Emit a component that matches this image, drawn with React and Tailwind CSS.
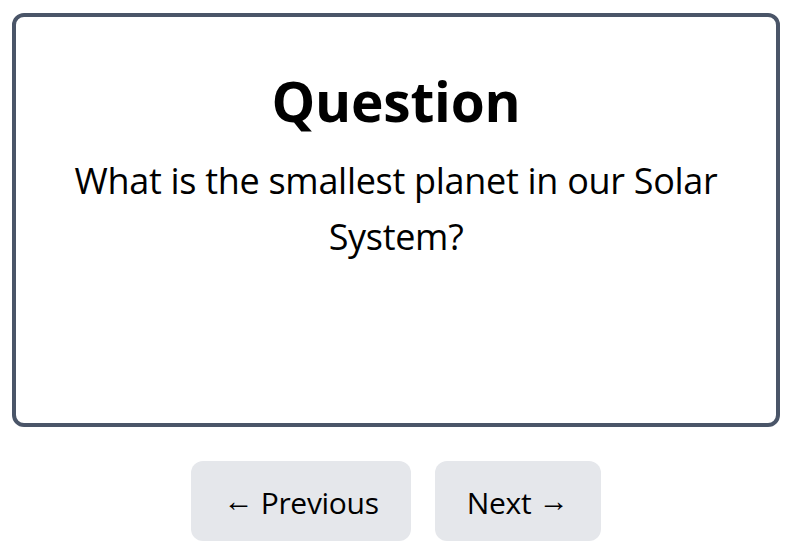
import React, { useState } from "react";

const questions = [
  { q: "What is the smallest planet in our Solar System?", a: "Mercury" },
];

const App = () => {
  const [index, setIndex] = useState(0);
  const card = questions[index];

  return (
    <div className="min-h-screen bg-white pt-[13px] font-['Open_Sans',sans-serif] text-black">
      <div className="mx-auto flex h-[414px] w-[768px] flex-col items-center rounded-xl border-4 border-[#4a5568] px-4">
        <h1 className="mt-[56px] text-[55px] font-bold leading-none tracking-[-0.2px]">Question</h1>
        <p className="mt-[25px] text-center text-[36px] leading-[56px] tracking-[-0.3px]">{card.q}</p>
      </div>

      <div className="mt-[34px] flex justify-center gap-6">
        <button
          className="h-20 rounded-xl bg-[#e5e7eb] px-8 text-[30px] tracking-[-0.3px]"
          onClick={() => setIndex((i) => Math.max(0, i - 1))}
        >
          <span className="align-[3px] font-['Liberation_Sans',sans-serif]">←</span> Previous
        </button>
        <button
          className="h-20 rounded-xl bg-[#e5e7eb] px-8 text-[30px] tracking-[-0.3px]"
          onClick={() => setIndex((i) => Math.min(questions.length - 1, i + 1))}
        >
          Next <span className="align-[3px] font-['Liberation_Sans',sans-serif]">→</span>
        </button>
      </div>
    </div>
  );
};

export default App;
